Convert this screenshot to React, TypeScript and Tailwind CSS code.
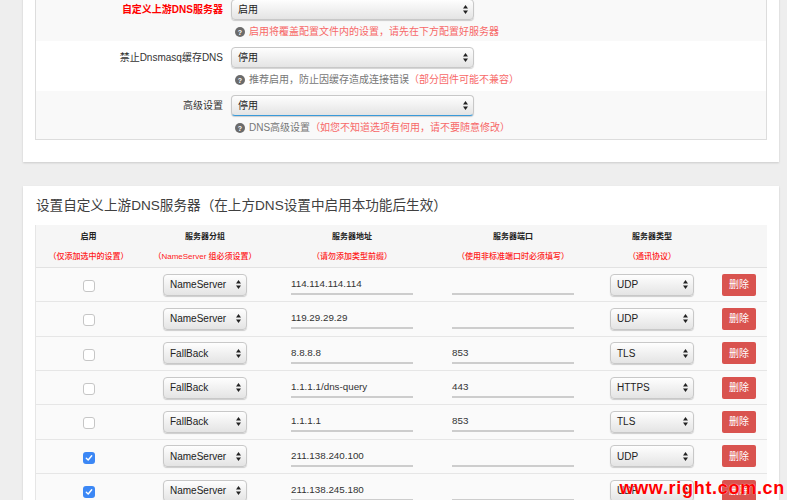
import React from 'react';

const FONT = "font-['Liberation_Sans','Noto_Sans_CJK_SC',sans-serif]";

function Arrows() {
  return (
    <svg width="5" height="9" viewBox="0 0 5 9" className="shrink-0">
      <path d="M2.5 0 L5 3.4 L0 3.4 Z" fill="#222" />
      <path d="M2.5 9 L5 5.6 L0 5.6 Z" fill="#222" />
    </svg>
  );
}

function Select({ value, className }: { value: string; className: string }) {
  return (
    <div
      className={`flex items-center justify-between rounded-[4px] border border-[#c8c8c8] bg-gradient-to-b from-[#fefefe] to-[#e4e4e4] pl-[6px] pr-[5px] text-[10px] text-[#222] shadow-[0_1px_1px_rgba(0,0,0,0.18)] ${className}`}
    >
      <span>{value}</span>
      <Arrows />
    </div>
  );
}

function Help() {
  return (
    <span className="mr-[4px] inline-flex h-[10px] w-[10px] items-center justify-center rounded-full bg-[#6b6b6b] text-[7px] font-bold leading-none text-white">
      ?
    </span>
  );
}

function Checkbox({ checked }: { checked: boolean }) {
  if (checked) {
    return (
      <span className="flex h-[12px] w-[12px] items-center justify-center rounded-[3px] bg-[#3b87f5]">
        <svg width="8" height="8" viewBox="0 0 8 8">
          <path d="M1.3 4.2 L3.2 6 L6.7 1.8" stroke="white" strokeWidth="1.4" fill="none" strokeLinecap="round" strokeLinejoin="round" />
        </svg>
      </span>
    );
  }
  return <span className="block h-[12px] w-[12px] rounded-[3px] border border-[#c6c6c6] bg-white" />;
}

const servers = [
  { on: false, group: 'NameServer', addr: '114.114.114.114', port: '', type: 'UDP' },
  { on: false, group: 'NameServer', addr: '119.29.29.29', port: '', type: 'UDP' },
  { on: false, group: 'FallBack', addr: '8.8.8.8', port: '853', type: 'TLS' },
  { on: false, group: 'FallBack', addr: '1.1.1.1/dns-query', port: '443', type: 'HTTPS' },
  { on: false, group: 'FallBack', addr: '1.1.1.1', port: '853', type: 'TLS' },
  { on: true, group: 'NameServer', addr: '211.138.240.100', port: '', type: 'UDP' },
  { on: true, group: 'NameServer', addr: '211.138.245.180', port: '', type: 'UDP' },
];

const COLS = 'grid grid-cols-[105px_128px_166px_156px_122px_55px]';

export default function App() {
  return (
    <div className={`relative h-[500px] overflow-hidden bg-[#eeeeee] ${FONT}`}>
      <div className="-mt-[7px] pl-[23px] pr-[8px]">
        {/* DNS settings card */}
        <div className="bg-white px-[12px] pb-[22px] shadow-[0_1px_2px_rgba(0,0,0,0.15)]">
          <div className="border-x border-b border-[#dddddd]">
            <div className="flex bg-[#f9f9f9] pb-[3px] pt-[6px]">
              <div className="h-[21px] w-[187px] text-right text-[10px] font-bold leading-[21px] text-[#ff0000]">自定义上游DNS服务器</div>
              <div className="ml-[8px]">
                <Select value="启用" className="h-[21px] w-[243px]" />
                <div className="mt-[6px] flex items-center pl-[4px] text-[10px] leading-[12px] text-[#f76868]">
                  <Help />
                  启用将覆盖配置文件内的设置，请先在下方配置好服务器
                </div>
              </div>
            </div>
            <div className="flex bg-white pb-[5px] pt-[6px]">
              <div className="h-[21px] w-[187px] text-right text-[10px] leading-[21px] text-[#333]">禁止Dnsmasq缓存DNS</div>
              <div className="ml-[8px]">
                <Select value="停用" className="h-[21px] w-[243px]" />
                <div className="mt-[6px] flex items-center pl-[4px] text-[10px] leading-[12px] text-[#777]">
                  <Help />
                  推荐启用，防止因缓存造成连接错误
                  <span className="text-[#f76868]">（部分固件可能不兼容）</span>
                </div>
              </div>
            </div>
            <div className="flex bg-[#f9f9f9] pb-[5px] pt-[4px]">
              <div className="h-[21px] w-[187px] text-right text-[10px] leading-[21px] text-[#333]">高级设置</div>
              <div className="ml-[8px]">
                <Select value="停用" className="h-[21px] w-[243px] border-b-[#3a9ad9]" />
                <div className="mt-[6px] flex items-center pl-[4px] text-[10px] leading-[12px] text-[#777]">
                  <Help />
                  DNS高级设置
                  <span className="text-[#f76868]">（如您不知道选项有何用，请不要随意修改）</span>
                </div>
              </div>
            </div>
          </div>
        </div>

        {/* Upstream server card */}
        <div className="mt-[24px] bg-white px-[12px] pb-[20px] shadow-[0_1px_2px_rgba(0,0,0,0.15)]">
          <h2 className="pl-[1px] pt-[10px] text-[13.6px] leading-[20px] text-[#404040]">
            设置自定义上游DNS服务器（在上方DNS设置中启用本功能后生效）
          </h2>
          <div className="mt-[9px] border-l border-[#e6e6e6]">
            <div className={`${COLS} h-[43px] border-b border-[#e2e2e2] bg-[#f6f6f6] pt-[7px] text-center`}>
              {[
                ['启用', '（仅添加选中的设置）'],
                ['服务器分组', '（NameServer 组必须设置）'],
                ['服务器地址', '（请勿添加类型前缀）'],
                ['服务器端口', '（使用非标准端口时必须填写）'],
                ['服务器类型', '（通讯协议）'],
                ['', ''],
              ].map(([title, note], i) => (
                <div key={i}>
                  <div className="h-[10px] text-[8px] font-bold leading-[10px] text-[#222]">{title}</div>
                  <div className="mt-[10px] h-[10px] text-[8px] font-medium leading-[10px] text-[#ff1a1a]">{note}</div>
                </div>
              ))}
            </div>
            {servers.map((s, i) => (
              <div key={i} className={`${COLS} h-[34.33px] items-center border-b border-[#e6e6e6] bg-[#fafafa]`}>
                <div className="flex justify-center pt-[3px]">
                  <Checkbox checked={s.on} />
                </div>
                <div className="flex justify-center">
                  <Select value={s.group} className="h-[22px] w-[84px]" />
                </div>
                <div className="flex justify-center">
                  <div className="h-[21px] w-[122px] border-b-2 border-[#cdcdcd] pt-[3px] text-[9.8px] leading-[14px] text-[#333]">{s.addr}</div>
                </div>
                <div className="flex justify-center">
                  <div className="h-[21px] w-[122px] border-b-2 border-[#cdcdcd] pt-[3px] text-[9.8px] leading-[14px] text-[#333]">{s.port}</div>
                </div>
                <div className="flex justify-center">
                  <Select value={s.type} className="h-[22px] w-[84px]" />
                </div>
                <div className="flex justify-center pr-[3px]">
                  <button className="h-[22px] w-[34px] rounded-[2px] bg-[#d9534f] text-[10px] text-white">删除</button>
                </div>
              </div>
            ))}
          </div>
        </div>
      </div>

      <div className="absolute bottom-[2px] right-[2px] text-[18px] font-bold leading-[20px] tracking-[0.7px] text-[#ff0000] [text-shadow:0_0_1px_#fff]">
        www.right.com.cn
      </div>
    </div>
  );
}
